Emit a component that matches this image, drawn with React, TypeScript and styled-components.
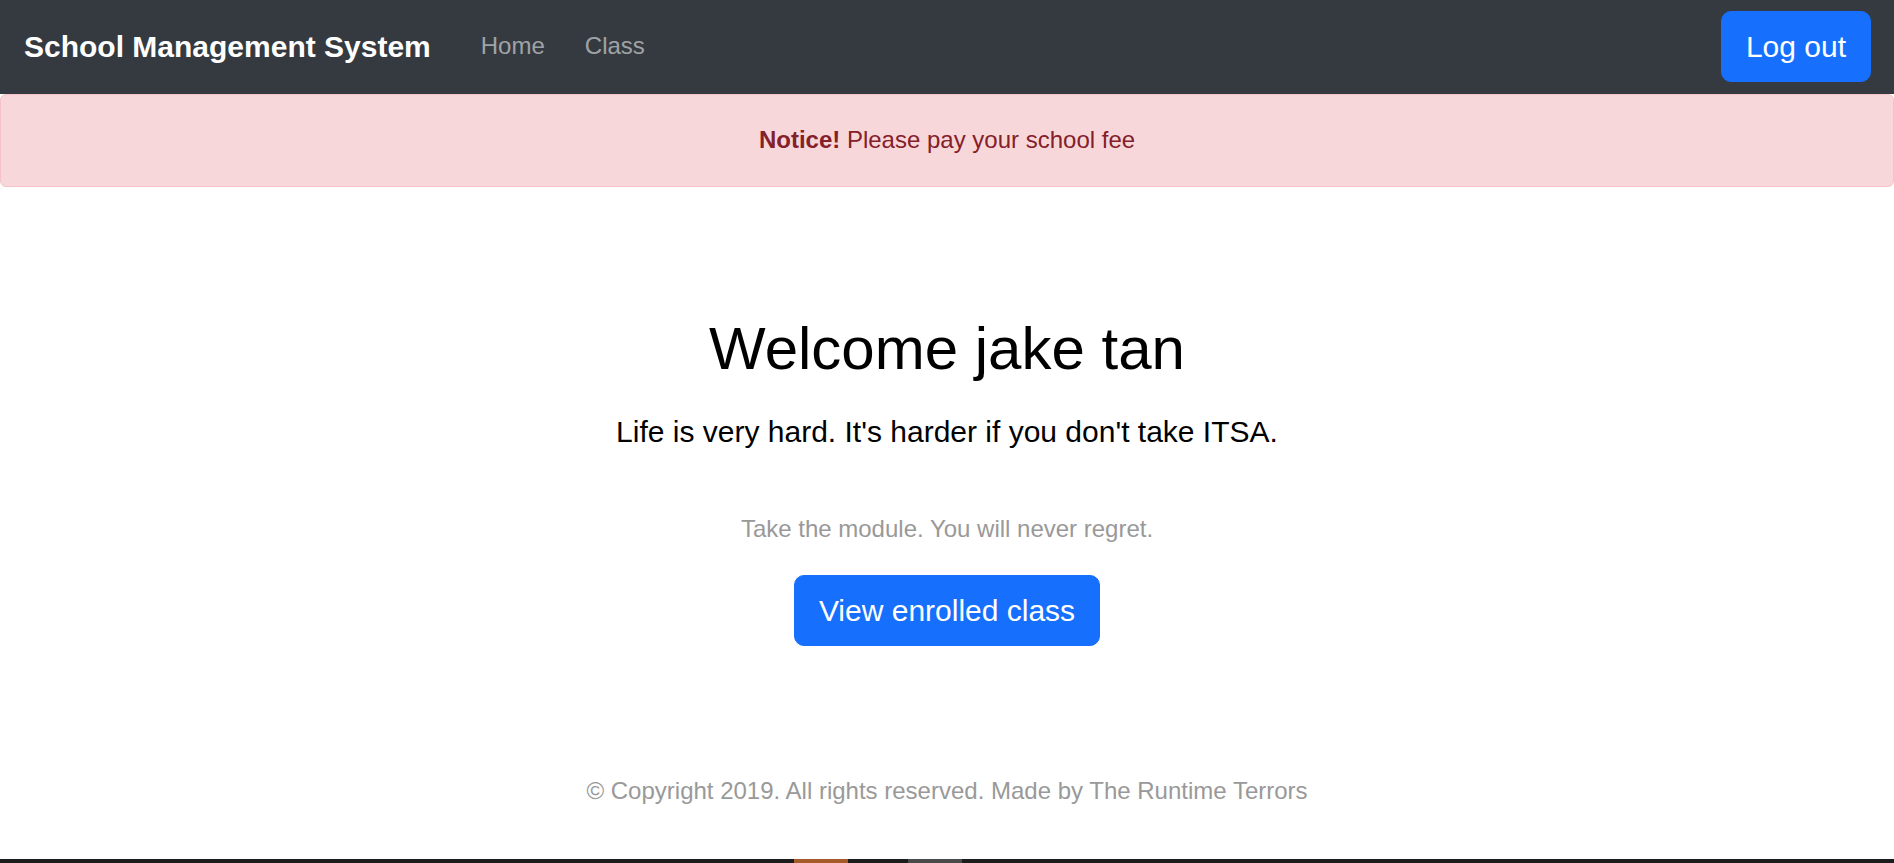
import React from "react";
import styled, { createGlobalStyle } from "styled-components";

const GlobalStyle = createGlobalStyle`
  html, body { margin: 0; padding: 0; }
  body {
    font-family: "Liberation Sans", Arial, sans-serif;
    background: #ffffff;
    color: #212529;
  }
  * { box-sizing: border-box; }
`;

const Page = styled.div`
  min-height: 100vh;
  display: flex;
  flex-direction: column;
`;

const Navbar = styled.nav`
  height: 94px;
  background: #343a40;
  display: flex;
  align-items: center;
  padding: 0 23px 2px 24px;
`;

const Brand = styled.a`
  font-size: 30px;
  font-weight: 700;
  color: #ffffff;
  text-decoration: none;
  line-height: 45px;
  margin-right: 50px;
`;

const NavLinks = styled.div`
  display: flex;
  gap: 40px;
  flex: 1;
`;

const NavLink = styled.a`
  font-size: 24px;
  line-height: 36px;
  color: rgba(255, 255, 255, 0.55);
  text-decoration: none;
`;

const Button = styled.button`
  font-family: inherit;
  font-size: 30px;
  line-height: 45px;
  padding: 12px 24px;
  border: 1px solid #166ffd;
  border-radius: 10px;
  background: #166ffd;
  color: #ffffff;
  cursor: pointer;
`;

const Alert = styled.div`
  background: #f8d7da;
  border: 1px solid #f5c2c7;
  border-radius: 6px;
  color: #842029;
  font-size: 24px;
  line-height: 36px;
  padding: 27px 24px 28px;
  text-align: center;
`;

const Main = styled.main`
  flex: 1;
  display: flex;
  flex-direction: column;
  align-items: center;
  padding-top: 126px;
  text-align: center;
`;

const Title = styled.h1`
  margin: 0;
  font-size: 60px;
  font-weight: 400;
  line-height: 72px;
  color: #000000;
`;

const Lead = styled.p`
  margin: 24px 0 0;
  font-size: 30px;
  line-height: 45px;
  color: #000000;
`;

const Muted = styled.p<{ $top: number }>`
  margin: ${(p) => p.$top}px 0 0;
  font-size: 24px;
  line-height: 36px;
  color: #999999;
`;

const ActionWrap = styled.div`
  margin-top: 28px;
`;

const Taskbar = styled.div`
  height: 4px;
  background: #1c1c1c;
  display: flex;
`;

const TaskItem = styled.div<{ $left: number; $width: number; $color: string }>`
  margin-left: ${(p) => p.$left}px;
  width: ${(p) => p.$width}px;
  background: ${(p) => p.$color};
`;

export default function App() {
  return (
    <>
      <GlobalStyle />
      <Page>
        <Navbar>
          <Brand href="#">School Management System</Brand>
          <NavLinks>
            <NavLink href="#">Home</NavLink>
            <NavLink href="#">Class</NavLink>
          </NavLinks>
          <Button>Log out</Button>
        </Navbar>
        <Alert>
          <strong>Notice!</strong> Please pay your school fee
        </Alert>
        <Main>
          <Title>Welcome jake tan</Title>
          <Lead>Life is very hard. It's harder if you don't take ITSA.</Lead>
          <Muted $top={57}>Take the module. You will never regret.</Muted>
          <ActionWrap>
            <Button>View enrolled class</Button>
          </ActionWrap>
          <Muted $top={127}>
            © Copyright 2019. All rights reserved. Made by The Runtime Terrors
          </Muted>
        </Main>
        <Taskbar>
          <TaskItem $left={794} $width={54} $color="#a65c28" />
          <TaskItem $left={60} $width={54} $color="#4a4a4a" />
        </Taskbar>
      </Page>
    </>
  );
}
